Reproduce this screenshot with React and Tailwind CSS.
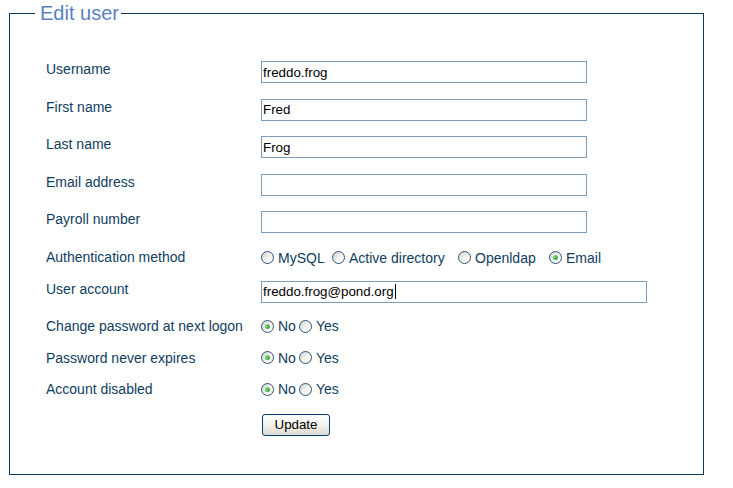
import React from "react";

const labelCls = "w-[215px] shrink-0 text-[14px] leading-[16px] text-[#0f3d5e]";

function Radio({ checked }) {
  return (
    <span className="relative flex h-[13px] w-[13px] shrink-0 items-center justify-center rounded-full border border-[#2d5278] bg-gradient-to-br from-[#d3d3cc] via-[#f1f1ed] to-white">
      {checked && (
        <span className="h-[5px] w-[5px] rounded-full bg-gradient-to-br from-[#8ee38e] to-[#1e9e1e]" />
      )}
    </span>
  );
}

function Option({ checked, label, width }) {
  return (
    <span className={`flex items-center gap-[4px] ${width}`}>
      <Radio checked={checked} />
      <span className="text-[14px] leading-[16px] text-[#0f3d5e]">{label}</span>
    </span>
  );
}

function TextRow({ label, value, wide }) {
  return (
    <div className="flex items-start">
      <div className={labelCls}>{label}</div>
      <input
        readOnly
        defaultValue={value}
        className={`${wide ? "w-[386px]" : "w-[326px]"} h-[22px] border border-[#7f9db9] bg-white px-[1px] text-[13.33px] text-black outline-none font-['Liberation_Sans',Arial,sans-serif]`}
      />
    </div>
  );
}

function YesNoRow({ label }) {
  return (
    <div className="flex h-[16px] items-center">
      <div className={labelCls}>{label}</div>
      <div className="flex items-center">
        <Option checked label="No" width="w-[38px]" />
        <Option label="Yes" />
      </div>
    </div>
  );
}

export default function App() {
  return (
    <div className="h-[488px] w-[733px] bg-white font-['Liberation_Sans',Arial,sans-serif]">
      <fieldset className="ml-[9px] mt-[3px] w-[695px] border border-[#0b3a5a] p-0">
        <legend className="ml-[25px] pl-[5px] pr-[2px] text-[20px] leading-[20px] text-[#5a7fbf]">
          Edit user
        </legend>
        <div className="flex flex-col gap-[15.6px] pb-[38px] pl-[36px] pt-[38px]">
          <TextRow label="Username" value="freddo.frog" />
          <TextRow label="First name" value="Fred" />
          <TextRow label="Last name" value="Frog" />
          <TextRow label="Email address" value="" />
          <TextRow label="Payroll number" value="" />
          <div className="flex h-[16px] items-start">
            <div className={labelCls}>Authentication method</div>
            <div className="flex items-center pt-[1px]">
              <Option label="MySQL" width="w-[71px]" />
              <Option label="Active directory" width="w-[126px]" />
              <Option label="Openldap" width="w-[91px]" />
              <Option checked label="Email" />
            </div>
          </div>
          <div className="flex items-start">
            <div className={labelCls}>User account</div>
            <div className="flex h-[22px] w-[386px] items-center border border-[#7f9db9] bg-white px-[1px] text-[13.33px] text-black">
              <span>freddo.frog@pond.org</span>
              <span className="ml-px h-[15px] w-px bg-black" />
            </div>
          </div>
          <YesNoRow label="Change password at next logon" />
          <YesNoRow label="Password never expires" />
          <YesNoRow label="Account disabled" />
          <div className="flex pt-px">
            <div className="w-[215px] shrink-0" />
            <button className="ml-px h-[22px] w-[68px] rounded-[3px] border border-[#003c74] bg-gradient-to-b from-white via-[#f3f2ec] to-[#dedbd0] text-[13.33px] leading-none text-black">
              Update
            </button>
          </div>
        </div>
      </fieldset>
    </div>
  );
}
